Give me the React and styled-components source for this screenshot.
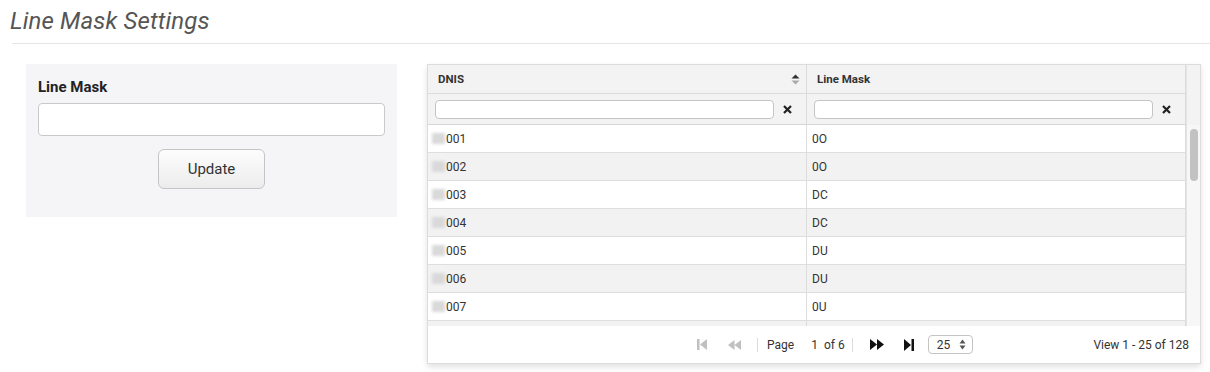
import React from 'react';
import styled, { createGlobalStyle } from 'styled-components';

const rows = [
  { dnis: '001', mask: '0O' },
  { dnis: '002', mask: '0O' },
  { dnis: '003', mask: 'DC' },
  { dnis: '004', mask: 'DC' },
  { dnis: '005', mask: 'DU' },
  { dnis: '006', mask: 'DU' },
  { dnis: '007', mask: '0U' },
];

const GlobalStyle = createGlobalStyle`
  html, body {
    margin: 0;
    background: #fff;
    font-family: Roboto, "Liberation Sans", Arial, sans-serif;
  }
  * { box-sizing: border-box; }
`;

const Page = styled.div`
  width: 1210px;
  height: 372px;
  overflow: hidden;
  padding-left: 12px;
`;

const Title = styled.h1`
  margin: 0 0 0 -2px;
  padding-top: 7px;
  height: 43px;
  font-size: 24px;
  line-height: 28px;
  font-style: italic;
  font-weight: 400;
  color: #555;
  letter-spacing: 0.15px;
`;

const Rule = styled.div`
  height: 1px;
  background: #e6e6e6;
`;

const Content = styled.div`
  display: flex;
  align-items: flex-start;
  gap: 30px;
  padding: 20px 0 0 14px;
`;

const FormPanel = styled.div`
  width: 371px;
  height: 153px;
  background: #f5f5f7;
  padding: 14px 12px 0;
  display: flex;
  flex-direction: column;
`;

const FieldLabel = styled.label`
  font-size: 15px;
  font-weight: 700;
  color: #222;
  height: 25px;
`;

const TextInput = styled.input`
  width: 347px;
  height: 33px;
  border: 1px solid #c9c9c9;
  border-radius: 4px;
  background: #fff;
  outline: none;
`;

const UpdateButton = styled.button`
  align-self: center;
  margin-top: 13px;
  width: 107px;
  height: 40px;
  border: 1px solid #c4c4c4;
  border-radius: 6px;
  background: linear-gradient(#fdfdfd, #ececec);
  font-family: Roboto, "Liberation Sans", sans-serif;
  font-size: 15px;
  color: #333;
`;

const Grid = styled.div`
  width: 774px;
  border: 1px solid #dcdcdc;
  box-shadow: 0 3px 6px rgba(0, 0, 0, 0.12);
  background: #fff;
`;

const Body = styled.div`
  display: flex;
  height: 261px;
  overflow: hidden;
`;

const Table = styled.div`
  width: 758px;
  display: flex;
  flex-direction: column;
`;

const Row = styled.div`
  display: grid;
  grid-template-columns: 379px 379px;
  height: ${(p) => p.$h}px;
  flex: none;
  background: ${(p) => p.$bg || '#fff'};
  border-bottom: 1px solid ${(p) => p.$line || '#dedede'};
`;

const HeadCell = styled.div`
  display: flex;
  align-items: center;
  justify-content: space-between;
  padding: 0 6px 0 10px;
  font-size: 11.5px;
  font-weight: 700;
  color: #333;
  border-right: 1px solid #dcdcdc;
`;

const FilterCell = styled.div`
  display: flex;
  align-items: center;
  gap: 9px;
  padding: 0 14px 0 7px;
  border-right: 1px solid #dcdcdc;
`;

const FilterInput = styled.input`
  flex: 1;
  height: 19px;
  border: 1px solid #c4c4c4;
  border-radius: 4px;
  background: #fff;
  outline: none;
`;

const Cell = styled.div`
  display: flex;
  align-items: center;
  padding-left: ${(p) => (p.$first ? 4 : 5)}px;
  font-size: 12px;
  color: #333;
  border-right: 1px solid #dcdcdc;
`;

const Blur = styled.span`
  display: inline-block;
  width: 13px;
  height: 11px;
  background: #d9d9d9;
  filter: blur(1.5px);
  margin-right: 1px;
`;

const ScrollTrack = styled.div`
  width: 15px;
  background: #f7f7f7;
  border-left: 1px solid #e4e4e4;
  position: relative;
`;

const ScrollHead = styled.div`
  height: 60px;
  background: #f3f3f3;
`;

const Thumb = styled.div`
  position: absolute;
  left: 3px;
  top: 64px;
  width: 8px;
  height: 52px;
  border-radius: 4px;
  background: #c2c2c2;
`;

const Footer = styled.div`
  height: 37px;
  display: flex;
  align-items: center;
  padding: 0 11px 0 258px;
  font-size: 12px;
  color: #333;
`;

const Pager = styled.div`
  display: flex;
  align-items: center;
`;

const IconBtn = styled.span`
  display: inline-flex;
  width: 32px;
  justify-content: center;
  color: ${(p) => (p.$off ? '#c0c0c0' : '#111')};
`;

const Sep = styled.span`
  width: 1px;
  height: 14px;
  background: #dcdcdc;
  margin: 0 ${(p) => p.$r}px 0 ${(p) => p.$l}px;
`;

const PageText = styled.span`
  margin-right: ${(p) => p.$mr || 0}px;
`;

const PageSize = styled.div`
  margin-left: 3px;
  width: 45px;
  height: 19px;
  border: 1px solid #c4c4c4;
  border-radius: 4px;
  display: flex;
  align-items: center;
  justify-content: space-between;
  padding: 0 6px 0 8px;
`;

const ViewText = styled.span`
  margin-left: auto;
`;

const SortIcon = () => (
  <svg width="9" height="11" viewBox="0 0 9 11">
    <path d="M4.5 0.5 L8.5 4.5 H0.5 Z" fill="#333" />
    <path d="M4.5 10.5 L8.5 6.5 H0.5 Z" fill="#aaa" />
  </svg>
);

const ClearIcon = () => (
  <svg width="9" height="9" viewBox="0 0 9 9">
    <path d="M1 1 L8 8 M8 1 L1 8" stroke="#222" strokeWidth="2.2" />
  </svg>
);

const First = () => (
  <svg width="10" height="11" viewBox="0 0 10 11">
    <rect x="0" y="0" width="2.5" height="11" fill="currentColor" />
    <path d="M10 0 L3 5.5 L10 11 Z" fill="currentColor" />
  </svg>
);
const Prev = () => (
  <svg width="13" height="10" viewBox="0 0 13 10">
    <path d="M6.5 0 L0 5 L6.5 10 Z M13 0 L6.5 5 L13 10 Z" fill="currentColor" />
  </svg>
);
const Next = () => (
  <svg width="14" height="11" viewBox="0 0 14 11">
    <path d="M0 0 L7 5.5 L0 11 Z M7 0 L14 5.5 L7 11 Z" fill="currentColor" />
  </svg>
);
const Last = () => (
  <svg width="10" height="12" viewBox="0 0 10 12">
    <path d="M0 0 L7 6 L0 12 Z" fill="currentColor" />
    <rect x="7.5" y="0" width="2.5" height="12" fill="currentColor" />
  </svg>
);
const UpDown = () => (
  <svg width="7" height="11" viewBox="0 0 7 11">
    <path d="M3.5 0.5 L6.5 4.5 H0.5 Z M3.5 10.5 L6.5 6.5 H0.5 Z" fill="#555" />
  </svg>
);

export default function App() {
  return (
    <Page>
      <GlobalStyle />
      <Title>Line Mask Settings</Title>
      <Rule />
      <Content>
        <FormPanel>
          <FieldLabel>Line Mask</FieldLabel>
          <TextInput type="text" />
          <UpdateButton>Update</UpdateButton>
        </FormPanel>
        <Grid>
          <Body>
            <Table>
              <Row $h={29} $bg="#f3f3f3" $line="#dcdcdc">
                <HeadCell>
                  DNIS
                  <SortIcon />
                </HeadCell>
                <HeadCell>Line Mask</HeadCell>
              </Row>
              <Row $h={31} $bg="#f3f3f3" $line="#d6d6d6">
                <FilterCell>
                  <FilterInput />
                  <ClearIcon />
                </FilterCell>
                <FilterCell>
                  <FilterInput />
                  <ClearIcon />
                </FilterCell>
              </Row>
              {rows.map((r, i) => (
                <Row key={r.dnis} $h={28} $bg={i % 2 ? '#f2f2f2' : '#fff'}>
                  <Cell $first>
                    <Blur />
                    {r.dnis}
                  </Cell>
                  <Cell>{r.mask}</Cell>
                </Row>
              ))}
              <Row $h={28} $bg="#f2f2f2">
                <Cell />
                <Cell />
              </Row>
            </Table>
            <ScrollTrack>
              <ScrollHead />
              <Thumb />
            </ScrollTrack>
          </Body>
          <Footer>
            <Pager>
              <IconBtn $off>
                <First />
              </IconBtn>
              <IconBtn $off>
                <Prev />
              </IconBtn>
              <Sep $l={7} $r={9} />
              <PageText $mr={17}>Page</PageText>
              <PageText $mr={6}>1</PageText>
              <PageText $mr={7}>of 6</PageText>
              <Sep $l={0} $r={8} />
              <IconBtn>
                <Next />
              </IconBtn>
              <IconBtn>
                <Last />
              </IconBtn>
              <PageSize>
                25
                <UpDown />
              </PageSize>
            </Pager>
            <ViewText>View 1 - 25 of 128</ViewText>
          </Footer>
        </Grid>
      </Content>
    </Page>
  );
}
